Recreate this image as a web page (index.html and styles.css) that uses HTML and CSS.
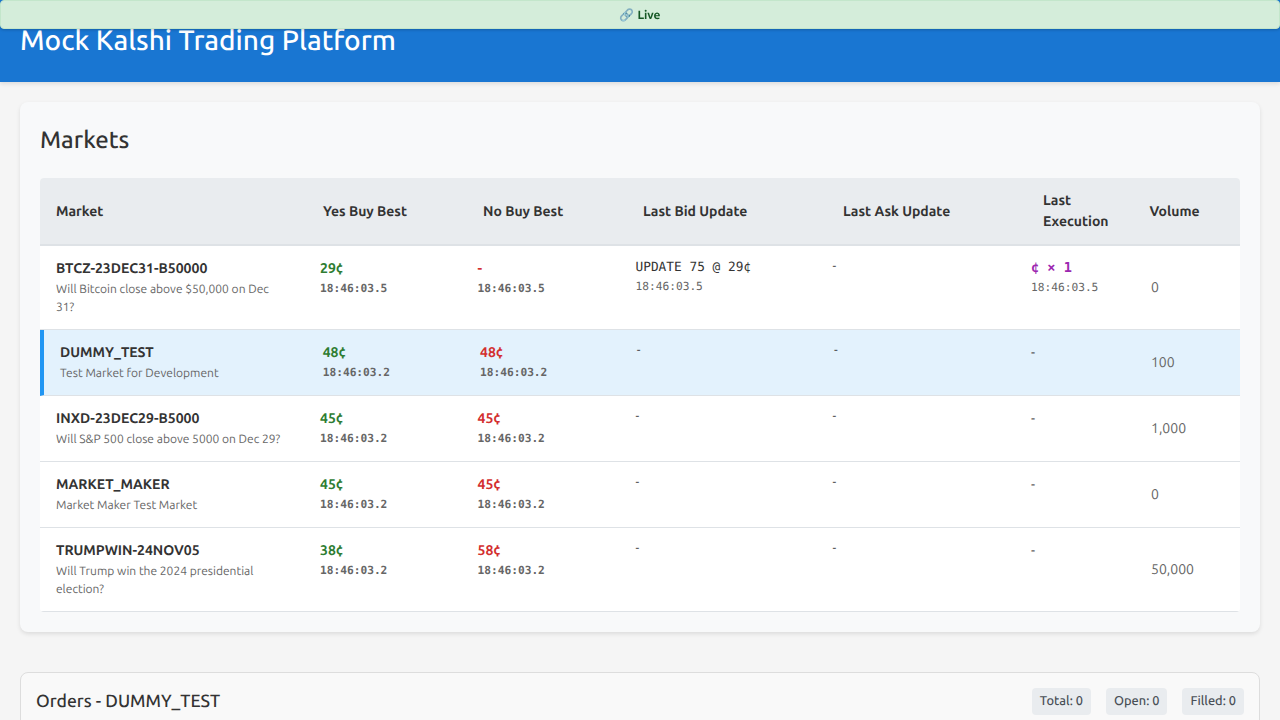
FILE: index.html
```html
<!DOCTYPE html>
<html lang="en">
<head>
<meta charset="UTF-8">
<meta name="viewport" content="width=device-width, initial-scale=1.0">
<title>Mock Kalshi Trading Platform</title>
<link rel="stylesheet" href="styles.css">
</head>
<body>

<div class="status-banner">🔗 Live</div>

<header class="page-header">
    <h1>Mock Kalshi Trading Platform</h1>
</header>

<main class="content">
    <section class="markets-card">
        <h2>Markets</h2>
        <div class="market-table">
            <div class="table-head">
                <div>Market</div>
                <div>Yes Buy Best</div>
                <div>No Buy Best</div>
                <div>Last Bid Update</div>
                <div>Last Ask Update</div>
                <div class="head-exec">Last Execution</div>
                <div>Volume</div>
            </div>

            <div class="market-row">
                <div>
                    <div class="ticker">BTCZ-23DEC31-B50000</div>
                    <div class="desc">Will Bitcoin close above $50,000 on Dec 31?</div>
                </div>
                <div><div class="price yes">29¢</div><div class="stamp">18:46:03.5</div></div>
                <div><div class="price no">-</div><div class="stamp">18:46:03.5</div></div>
                <div><div class="update">UPDATE 75 @ 29¢</div><div class="update-time">18:46:03.5</div></div>
                <div class="no-update">-</div>
                <div><div class="execution">¢ × 1</div><div class="update-time">18:46:03.5</div></div>
                <div class="volume">0</div>
            </div>

            <div class="market-row selected">
                <div>
                    <div class="ticker">DUMMY_TEST</div>
                    <div class="desc">Test Market for Development</div>
                </div>
                <div><div class="price yes">48¢</div><div class="stamp">18:46:03.2</div></div>
                <div><div class="price no">48¢</div><div class="stamp">18:46:03.2</div></div>
                <div class="no-update">-</div>
                <div class="no-update">-</div>
                <div class="no-exec">-</div>
                <div class="volume">100</div>
            </div>

            <div class="market-row">
                <div>
                    <div class="ticker">INXD-23DEC29-B5000</div>
                    <div class="desc">Will S&amp;P 500 close above 5000 on Dec 29?</div>
                </div>
                <div><div class="price yes">45¢</div><div class="stamp">18:46:03.2</div></div>
                <div><div class="price no">45¢</div><div class="stamp">18:46:03.2</div></div>
                <div class="no-update">-</div>
                <div class="no-update">-</div>
                <div class="no-exec">-</div>
                <div class="volume">1,000</div>
            </div>

            <div class="market-row">
                <div>
                    <div class="ticker">MARKET_MAKER</div>
                    <div class="desc">Market Maker Test Market</div>
                </div>
                <div><div class="price yes">45¢</div><div class="stamp">18:46:03.2</div></div>
                <div><div class="price no">45¢</div><div class="stamp">18:46:03.2</div></div>
                <div class="no-update">-</div>
                <div class="no-update">-</div>
                <div class="no-exec">-</div>
                <div class="volume">0</div>
            </div>

            <div class="market-row">
                <div>
                    <div class="ticker">TRUMPWIN-24NOV05</div>
                    <div class="desc">Will Trump win the 2024 presidential election?</div>
                </div>
                <div><div class="price yes">38¢</div><div class="stamp">18:46:03.2</div></div>
                <div><div class="price no">58¢</div><div class="stamp">18:46:03.2</div></div>
                <div class="no-update">-</div>
                <div class="no-update">-</div>
                <div class="no-exec">-</div>
                <div class="volume">50,000</div>
            </div>
        </div>
    </section>

    <section class="orders-card">
        <div class="orders-head">
            <h3>Orders - DUMMY_TEST</h3>
            <div class="order-stats">
                <span class="stat">Total: 0</span>
                <span class="stat">Open: 0</span>
                <span class="stat">Filled: 0</span>
            </div>
        </div>
    </section>
</main>

</body>
</html>
```

FILE: styles.css
```css
body {
    font-family: Ubuntu, "Noto Sans", sans-serif;
    text-rendering: geometricPrecision;
    margin: 0;
    padding: 0;
    background-color: #f5f5f5;
    color: #333;
}

.status-banner {
    position: fixed;
    top: 0;
    left: 0;
    right: 0;
    height: 27px;
    line-height: 29px;
    text-align: center;
    font-size: 12px;
    font-weight: 700;
    color: #155724;
    background-color: #d4edda;
    border: 1px solid #c3e6cb;
    border-radius: 4px;
    box-shadow: 0 1px 3px rgba(0, 0, 0, 0.2);
    z-index: 10;
}

.page-header {
    height: 82px;
    box-sizing: border-box;
    padding: 20px;
    background-color: #1976d2;
    color: #fff;
    box-shadow: 0 2px 4px rgba(0, 0, 0, 0.1);
}

.page-header h1 {
    margin: 0;
    font-size: 28px;
    font-weight: 500;
    line-height: 42px;
}

.content {
    padding: 20px;
}

.markets-card {
    padding: 20px;
    background-color: #f8f9fa;
    border-radius: 8px;
    box-shadow: 0 2px 4px rgba(0, 0, 0, 0.1);
}

.markets-card h2 {
    margin: 0 0 20px;
    font-size: 24px;
    font-weight: 500;
    line-height: 36px;
}

.market-table {
    background-color: #fff;
    border-radius: 4px;
    overflow: hidden;
}

.table-head {
    display: grid;
    grid-template-columns: 267px 160px 160px 200px 200px 106.5px 1fr;
    align-items: center;
    height: 66px;
    padding: 0 16px;
    background-color: #e9ecef;
    border-bottom: 2px solid #dee2e6;
    font-size: 14px;
    font-weight: 700;
    line-height: 21px;
}

.head-exec {
    padding-right: 16px;
}

.market-row {
    display: grid;
    grid-template-columns: 264px 157.5px 158px 197px 198.5px 120px 1fr;
    padding: 12px 16px;
    border-bottom: 1px solid #dee2e6;
}

.market-row.selected {
    grid-template-columns: 262.7px 157.3px 156.7px 197.3px 197px 120px 1fr;
    background-color: #e3f2fd;
    border-left: 4px solid #2196f3;
}

.ticker {
    font-size: 14px;
    font-weight: 700;
    line-height: 21px;
    margin-bottom: 2px;
}

.desc {
    max-width: 232px;
    font-size: 12px;
    line-height: 18px;
    color: #666;
}

.price {
    font-size: 14px;
    font-weight: 700;
    line-height: 21px;
}

.yes {
    color: #2e7d32;
}

.no {
    color: #d32f2f;
}

.stamp {
    font-family: "DejaVu Sans Mono", monospace;
    font-size: 11.2px;
    font-weight: 700;
    line-height: 17px;
    margin-top: 1px;
    color: #666;
}

.update {
    font-family: "DejaVu Sans Mono", monospace;
    font-size: 12.8px;
    line-height: 19px;
}

.no-update {
    font-size: 12.8px;
    line-height: 16px;
}

.update-time {
    font-family: "DejaVu Sans Mono", monospace;
    font-size: 11.2px;
    line-height: 17px;
    margin-top: 1px;
    color: #666;
}

.execution {
    font-family: "DejaVu Sans Mono", monospace;
    font-size: 13.6px;
    font-weight: 700;
    line-height: 20px;
    color: #9c27b0;
}

.no-exec {
    font-size: 14px;
    line-height: 21px;
}

.volume {
    align-self: center;
    font-size: 14px;
    line-height: 21px;
    margin-top: -1px;
    color: #666;
}

.orders-card {
    margin-top: 40px;
    padding: 15px;
    height: 300px;
    background-color: #f9f9f9;
    border: 1px solid #ddd;
    border-radius: 8px;
}

.orders-head {
    display: flex;
    justify-content: space-between;
    align-items: center;
}

.orders-head h3 {
    margin: 0;
    font-size: 17.6px;
    font-weight: 500;
}

.order-stats {
    display: flex;
    gap: 15px;
}

.stat {
    padding: 5px 8px;
    font-size: 12.8px;
    line-height: 17px;
    font-weight: 500;
    color: #495057;
    background-color: #e9ecef;
    border-radius: 4px;
}
```
